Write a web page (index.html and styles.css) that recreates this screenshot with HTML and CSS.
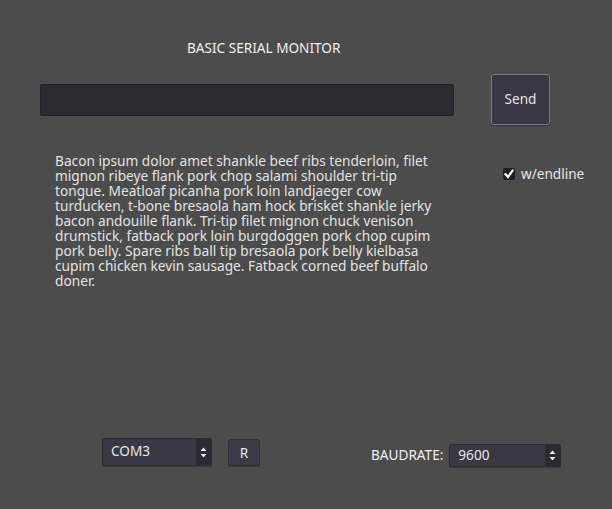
FILE: index.html
```html
<!DOCTYPE html>
<html>
<head>
<meta charset="utf-8">
<link rel="stylesheet" href="styles.css">
</head>
<body>
<div class="app">
  <div class="title">BASIC SERIAL MONITOR</div>
  <div class="send-row">
    <div class="line-edit"></div>
    <div class="btn send">Send</div>
  </div>
  <div class="main">
    <p class="log">Bacon ipsum dolor amet shankle beef ribs tenderloin, filet mignon ribeye flank pork chop salami shoulder tri-tip tongue. Meatloaf picanha pork loin landjaeger cow turducken, t-bone bresaola ham hock brisket shankle jerky bacon andouille flank. Tri-tip filet mignon chuck venison drumstick, fatback pork loin burgdoggen pork chop cupim pork belly. Spare ribs ball tip bresaola pork belly kielbasa cupim chicken kevin sausage. Fatback corned beef buffalo doner.</p>
    <label class="check">
      <span class="box"><svg width="10" height="10" viewBox="0 0 10 10"><path d="M1.5 5.2 L4 8 L8.6 1.6" fill="none" stroke="#fff" stroke-width="2.2" stroke-linecap="square"/></svg></span>
      <span>w/endline</span>
    </label>
  </div>
  <div class="bottom">
    <div class="select com">
      <span class="val">COM3</span>
      <span class="arrows"><svg width="7" height="11" viewBox="0 0 7 11"><path d="M3.5 0.5 L6.5 4 L0.5 4 Z M3.5 10.5 L6.5 7 L0.5 7 Z" fill="#e8e8e8"/></svg></span>
    </div>
    <div class="btn r">R</div>
    <div class="baud">
      <span class="baud-label">BAUDRATE:</span>
      <div class="select rate">
        <span class="val">9600</span>
        <span class="arrows"><svg width="7" height="11" viewBox="0 0 7 11"><path d="M3.5 0.5 L6.5 4 L0.5 4 Z M3.5 10.5 L6.5 7 L0.5 7 Z" fill="#e8e8e8"/></svg></span>
      </div>
    </div>
  </div>
</div>
</body>
</html>
```
FILE: styles.css
```css
html, body {
  margin: 0;
  padding: 0;
  background: #4c4c4c;
}
body {
  width: 612px;
  height: 509px;
  overflow: hidden;
  font-family: "Noto Sans", "DejaVu Sans", sans-serif;
  color: #e0e0e0;
}
.app {
  display: flex;
  flex-direction: column;
  height: 509px;
}
.title {
  margin-top: 39px;
  padding-left: 187px;
  font-size: 13.6px;
  line-height: 18px;
  color: #f0f0f0;
}
.send-row {
  display: flex;
  align-items: center;
  margin-top: 17px;
  padding-left: 40px;
  gap: 37px;
}
.line-edit {
  width: 412px;
  height: 30px;
  background: #2c2a32;
  border: 1px solid #25232a;
  border-radius: 2px;
}
.btn {
  box-sizing: border-box;
  display: flex;
  align-items: center;
  justify-content: center;
  background: #3c3a46;
  border: 1px solid #2f2e36;
  border-radius: 3px;
  font-size: 13.6px;
  color: #e6e6e6;
  box-shadow: 0 1px 1px rgba(0,0,0,0.25);
}
.send {
  width: 59px;
  height: 51px;
  padding-bottom: 3px;
  border-color: #6a7c96;
  background: #393744;
}
.main {
  flex: 1;
  display: flex;
  align-items: flex-start;
  padding-left: 55px;
  margin-top: 28px;
}
.log {
  margin: 0;
  width: 390px;
  font-size: 13.7px;
  line-height: 15px;
  color: #e2e2e2;
}
.check {
  display: flex;
  align-items: center;
  gap: 6px;
  margin-left: 58px;
  margin-top: 11px;
  font-size: 13.6px;
  color: #e6e6e6;
}
.box {
  width: 12px;
  height: 12px;
  background: #1d1c21;
  border-radius: 2px;
  display: flex;
  align-items: center;
  justify-content: center;
}
.bottom {
  display: flex;
  align-items: center;
  padding-left: 102px;
  margin-bottom: 43px;
  height: 28px;
}
.select {
  box-sizing: border-box;
  display: flex;
  align-items: stretch;
  background: #3a3844;
  border: 1px solid #2e2d34;
  border-radius: 2px;
  font-size: 13.6px;
  color: #e6e6e6;
  box-shadow: 0 1px 1px rgba(0,0,0,0.25);
}
.select .val {
  flex: 1;
  display: flex;
  align-items: center;
  padding-left: 8px;
  padding-bottom: 3px;
}
.select .arrows {
  width: 15px;
  background: #2c2b33;
  display: flex;
  align-items: center;
  justify-content: center;
}
.com {
  width: 110px;
  height: 28px;
}
.r {
  width: 32px;
  height: 27px;
  margin-left: 16px;
}
.baud {
  display: flex;
  align-items: center;
  margin-left: 111px;
  margin-top: 6px;
}
.baud-label {
  font-size: 13.6px;
  color: #f0f0f0;
  margin-right: 6px;
  padding-bottom: 1px;
}
.rate {
  width: 112px;
  height: 23px;
}
.rate .val {
  padding-bottom: 2px;
}
```
